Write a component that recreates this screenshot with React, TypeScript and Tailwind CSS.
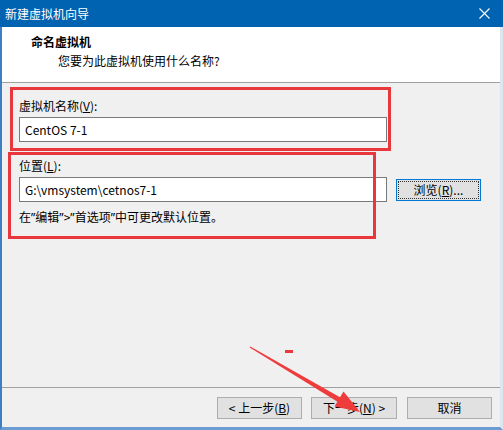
const FONT = { fontFamily: '"Noto Sans CJK SC", "Noto Sans", sans-serif' };

function Btn({ children, width }: { children: React.ReactNode; width: string }) {
  return (
    <button
      type="button"
      className={`${width} flex h-[22px] items-center justify-center border border-[#adadad] bg-[#e1e1e1] text-[12px] leading-none text-black`}
    >
      {children}
    </button>
  );
}

function Q({ c }: { c: string }) {
  return <span className="font-['Noto_Sans']">{c}</span>;
}

export default function App() {
  return (
    <div
      className="relative flex h-[430px] w-[503px] flex-col overflow-hidden bg-[#f0f0f0] text-[12px] text-black"
      style={FONT}
    >
      {/* title bar */}
      <div className="flex h-[27px] shrink-0 items-center justify-between bg-[#0063b1] pl-[5px] pr-[13px] text-white">
        <span className="leading-none">新建虚拟机向导</span>
        <svg width="11" height="11" viewBox="0 0 11 11">
          <path d="M0.5 0.5 L10.5 10.5 M10.5 0.5 L0.5 10.5" stroke="#ffffff" strokeWidth="1.1" />
        </svg>
      </div>

      <div className="flex flex-1 flex-col border-b-[3px] border-l-2 border-r-[3px] border-b-[#6b9bd0] border-l-[#3d7fc2] border-r-[#dde5ee]">
        {/* header */}
        <div className="h-[56px] shrink-0 border-b border-[#a0a0a0] bg-white pl-[29px] pt-[5px]">
          <div className="font-bold leading-[19px]">命名虚拟机</div>
          <div className="pl-[27px] leading-[19px]">您要为此虚拟机使用什么名称?</div>
        </div>

        {/* content */}
        <div className="flex-1 border-b border-[#a0a0a0] pl-[17px] pt-[15px]">
          <div className="leading-[16px]">
            虚拟机名称(<span className="underline">V</span>):
          </div>
          <input
            readOnly
            value="CentOS 7-1"
            className="mt-[3px] block h-[25px] w-[368px] border border-[#7a7a7a] bg-white pl-[5px] text-[12px] outline-none"
          />

          <div className="mt-[16px] leading-[16px]">
            位置(<span className="underline">L</span>):
          </div>
          <div className="mt-[3px] flex items-center">
            <input
              readOnly
              value="G:\vmsystem\cetnos7-1"
              className="block h-[25px] w-[368px] border border-[#7a7a7a] bg-white pl-[5px] text-[12px] outline-none"
            />
            <button
              type="button"
              className="ml-[9px] flex h-[22px] w-[85px] items-center justify-center border border-[#0078d7] bg-[#e1e1e1] p-[1px]"
            >
              <span className="flex h-full w-full items-center justify-center border border-dotted border-[#333] text-[12px] leading-none">
                浏览(<span className="underline">R</span>)...
              </span>
            </button>
          </div>
          <div className="mt-[7px] leading-[16px]">
            在<Q c="”" />编辑<Q c="”" />&gt;<Q c="”" />首选项<Q c="”" />中可更改默认位置。
          </div>
        </div>

        {/* footer */}
        <div className="flex h-[39px] shrink-0 justify-end pr-[8px] pt-[9px]">
          <Btn width="w-[85px]">
            &lt; 上一步(<span className="underline">B</span>)
          </Btn>
          <div className="w-[9px]" />
          <Btn width="w-[86px]">
            下一步(<span className="underline">N</span>) &gt;
          </Btn>
          <div className="w-[10px]" />
          <Btn width="w-[85px]">取消</Btn>
        </div>
      </div>

      {/* annotations */}
      <div className="pointer-events-none absolute left-[10px] top-[87px] h-[64px] w-[381px] border-[3px] border-[#e8383d]" />
      <div className="pointer-events-none absolute left-[8px] top-[152px] h-[87px] w-[368px] border-[3px] border-[#e8383d]" />
      <div className="pointer-events-none absolute left-[285px] top-[350px] h-[3px] w-[8px] bg-[#e8383d]" />
      <svg className="pointer-events-none absolute left-0 top-0" width="503" height="430" viewBox="0 0 503 430">
        <polygon points="250.3,346.5 249.7,347.5 338.3,402.2 340.9,397.8" fill="#ee3b3b" />
        <polygon points="360,412 334.5,406.5 343.5,391.5" fill="#ee3b3b" />
      </svg>
    </div>
  );
}
